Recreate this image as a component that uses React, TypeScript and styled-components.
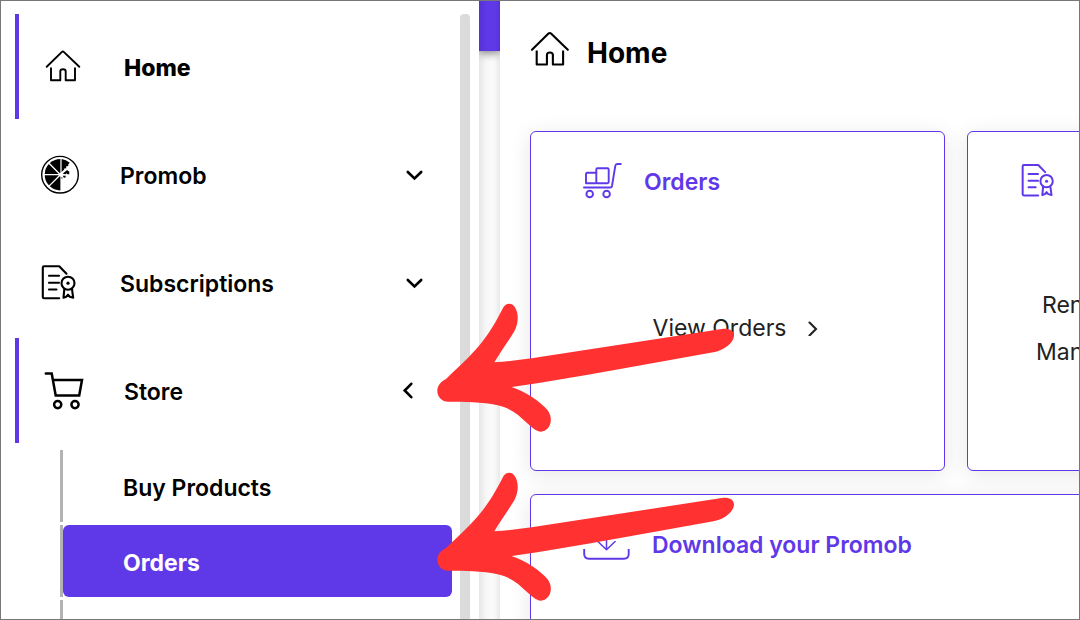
import React from 'react';
import styled, { createGlobalStyle, css } from 'styled-components';

const purple = '#5f38e8';

const GlobalStyle = createGlobalStyle`
  *, *::before, *::after { box-sizing: border-box; }
  body {
    margin: 0;
    background: #fff;
    color: #000;
    font-family: Inter, "Liberation Sans", sans-serif;
  }
  ul { list-style: none; margin: 0; padding: 0; }
  a { color: inherit; text-decoration: none; }
`;

const Frame = styled.div`
  position: relative;
  display: flex;
  height: 100vh;
  overflow: hidden;
  border: 1px solid #777;
  background: #fff;
`;

const Sidebar = styled.nav`
  display: flex;
  flex: none;
  width: 478px;
  padding: 13px 9px 0 14px;
`;

const Menu = styled.ul`
  display: flex;
  flex-direction: column;
  flex: 1;
  gap: 3px;
  margin-right: 8px;
`;

const itemLook = css<{ $active?: boolean }>`
  display: flex;
  align-items: center;
  gap: 40px;
  width: 100%;
  height: 105px;
  padding: 0 26px 0 25px;
  border: 0 solid ${purple};
  border-left-width: ${(p) => (p.$active ? '4px' : '0')};
  background: none;
  color: #000;
  font-family: inherit;
  font-size: 23px;
  line-height: 30px;
  text-align: left;
`;

const NavLink = styled.a<{ $active?: boolean }>`
  ${itemLook}
  font-weight: 800;
`;

const NavButton = styled.button<{ $active?: boolean }>`
  ${itemLook}
  font-weight: 600;
  cursor: pointer;
`;

const NavLabel = styled.span`
  flex: 1;
  padding-top: 2px;
`;

const Icon = styled.svg<{ $w?: number; $h?: number; $stroke?: number }>`
  flex: none;
  width: ${(p) => p.$w ?? 40}px;
  height: ${(p) => p.$h ?? p.$w ?? 40}px;
  fill: none;
  stroke: currentColor;
  stroke-width: ${(p) => p.$stroke ?? 1.9};
  stroke-linecap: round;
  stroke-linejoin: round;
`;

const SubMenu = styled.ul`
  display: flex;
  flex-direction: column;
  gap: 3px;
  margin: 7px 0 0 45px;
`;

const SubItem = styled.li`
  border-left: 3px solid #b3b3b3;
`;

const SubLink = styled.a<{ $current?: boolean }>`
  display: flex;
  align-items: center;
  height: 72px;
  padding: 4px 60px 0;
  border-radius: 6px;
  background: ${(p) => (p.$current ? purple : 'transparent')};
  color: ${(p) => (p.$current ? '#fff' : '#000')};
  font-size: 23px;
  font-weight: ${(p) => (p.$current ? 700 : 600)};
  line-height: 30px;
`;

const ScrollTrack = styled.div`
  flex: none;
  width: 10px;
  border-radius: 4px 4px 0 0;
  background: #dbdbdb;
`;

const Gutter = styled.div`
  flex: none;
  width: 21px;
  background: linear-gradient(to right, #e6e6e6, #f7f7f7 35%, #fbfbfb 60%, #f8f8f8 75%, #e9e9e9);
`;

const TopBar = styled.div`
  height: 50px;
  background: linear-gradient(to right, #5631d4, ${purple} 40%, ${purple} 80%, #5631d4);
  box-shadow: 0 2px 8px rgba(0, 0, 0, 0.5);
  clip-path: inset(0 0 -12px 0);
`;

const Main = styled.main`
  flex: 1;
  min-width: 0;
  padding: 27px 0 0 30px;
  overflow: hidden;
`;

const PageHeading = styled.header`
  display: flex;
  align-items: center;
  gap: 14px;
  height: 44px;
  margin: 0 0 59px -1px;
`;

const Title = styled.h1`
  margin: 0;
  padding-top: 5px;
  font-size: 28px;
  font-weight: 700;
  line-height: 36px;
`;

const Cards = styled.div`
  display: grid;
  grid-template-columns: repeat(2, 415px);
  gap: 23px 22px;
`;

const Card = styled.section<{ $wide?: boolean }>`
  display: flex;
  flex-direction: column;
  grid-column: ${(p) => (p.$wide ? '1 / -1' : 'auto')};
  min-height: 340px;
  padding: 28px 52px 16px;
  border: 1px solid ${purple};
  border-radius: 6px;
  background: #fff;
  box-shadow: 0 4px 22px rgba(0, 0, 0, 0.1);
`;

const CardHead = styled.div`
  display: flex;
  align-items: center;
  gap: 21px;
  height: 42px;
  color: ${purple};
`;

const CardTitle = styled.h2`
  margin: 0;
  padding-top: 2px;
  font-size: 23px;
  font-weight: 600;
  line-height: 30px;
`;

const Links = styled.div<{ $start?: boolean }>`
  display: flex;
  flex: 1;
  flex-direction: column;
  align-items: ${(p) => (p.$start ? 'flex-start' : 'center')};
  justify-content: center;
  padding-left: ${(p) => (p.$start ? '16px' : '0')};
`;

const CardLink = styled.a<{ $indent?: boolean }>`
  display: flex;
  align-items: center;
  gap: 20px;
  height: 47px;
  padding-left: ${(p) => (p.$indent ? '6px' : '0')};
  color: #222;
  font-size: 23px;
  line-height: 30px;
`;

const Pointer = styled.svg<{ $top: number }>`
  position: absolute;
  left: 435px;
  top: ${(p) => p.$top}px;
  width: 300px;
  height: 130px;
  fill: #ff3131;
  pointer-events: none;
`;

const HomeIcon = ({ size = 40 }: { size?: number }) => (
  <Icon $w={size} viewBox="0 0 40 40" aria-hidden="true">
    <path d="M2.7 19.8 17.7 5.1Q18.9 4 20 5.1L35.3 19.8" />
    <path strokeLinecap="butt" d="M7 20.5V33.2H16.3V24.6Q16.3 22.3 19 22.3T21.7 24.6V33.2H31V20.5" />
  </Icon>
);

const PromobIcon = () => (
  <Icon viewBox="0 0 40 40" aria-hidden="true">
    <circle cx="20" cy="19.7" r="18.3" strokeWidth="1.4" />
    <path d="M20.4 4A15.7 15.7 0 0 0 20.4 35.4Z" fill="currentColor" stroke="none" />
    <g fill="currentColor" stroke="none">
      <path d="M21.6 17V4.1Q26 4.8 29.8 7.8L28.2 9.6 28.4 11 26 11.6 26.3 13.2 24.2 13.4 24.2 14.6z" />
      <path d="M22.7 18.8 27.3 14.7 27.8 16 29.2 16.2 29.3 19.2H27.2L26.7 18.3 25.4 19.3z" />
      <path d="M22.8 20.8H26L25 22.9 23.5 22.3zM20.8 22.5l1.7.1-.3 1.4z" />
    </g>
    <path d="M20.4 19.7H4M20.4 19.7 9 8.3M20.4 19.7 9 31.1" stroke="#fff" strokeWidth="1.3" />
    <circle cx="20.6" cy="19.7" r="1.8" fill="#fff" stroke="none" />
  </Icon>
);

const LicenseIcon = ({ size = 40 }: { size?: number }) => (
  <Icon $w={size} $stroke={2.1} viewBox="0 0 40 40" aria-hidden="true">
    <path d="M26.5 10.7 19.2 3.2H4Q2.8 3.2 2.8 4.4V34Q2.8 35.2 4 35.2H19.2" />
    <path d="M9 12.7H19M9 19.8H19M9 26.5H16.5" />
    <circle cx="28" cy="20.2" r="6.5" />
    <circle cx="28" cy="20.2" r="1.6" fill="currentColor" stroke="none" />
    <path d="M24.3 26.2 23.5 34.8 26.2 33.8 28 31.8 29.8 33.8 33.2 34.8 32 26.2M28 31.8V33" />
  </Icon>
);

const CartIcon = () => (
  <Icon $stroke={2.5} viewBox="0 0 40 40" aria-hidden="true">
    <path strokeLinejoin="miter" d="M1.8 2.5H7.7L11.7 24.5H35.2L38 9H9" />
    <circle cx="13.7" cy="33.6" r="3.6" />
    <circle cx="31" cy="33.6" r="3.6" />
  </Icon>
);

const TrolleyIcon = () => (
  <Icon viewBox="0 0 40 40" aria-hidden="true">
    <path d="M37.8 3H34.3Q32.6 3 32.3 4.8L29 25Q28.7 26.5 27.3 26.5H1" />
    <path d="M13.3 11.8H4.3Q3 11.8 3 13.1V22.2H13.3" />
    <rect x="13.3" y="7.2" width="12.4" height="15" rx="1.2" />
    <circle cx="6.7" cy="33" r="3.3" />
    <circle cx="23.6" cy="33" r="3.3" />
  </Icon>
);

const DownloadIcon = () => (
  <Icon $w={48} $h={40} viewBox="0 0 48 40" aria-hidden="true">
    <path strokeLinecap="butt" d="M1.2 25V30Q1.2 34.7 5.9 34.7H41Q45.7 34.7 45.7 30V25" />
    <path strokeWidth="1.5" d="M23.5 4V25.7M14.9 17.5 23.5 25.7 32.1 17.5" />
  </Icon>
);

const Chevron = ({ d }: { d: string }) => (
  <Icon $w={24} $stroke={2.6} viewBox="0 0 24 24" aria-hidden="true">
    <path d={d} strokeLinejoin="miter" />
  </Icon>
);

const down = 'M5.8 9 12.5 15.4 19.2 9';
const left = 'M9.3 4.8 2.7 11.5 9.3 18.2';

const Arrow = ({ top }: { top: number }) => (
  <Pointer $top={top} viewBox="168 39 900 390" aria-hidden="true">
    <path d="M172 302C172 286 184 274 198 267C262 205 312 168 367 58C376 36 398 37 406 54C417 74 415 100 403 124C385 154 362 184 343 217Q400 213 455 205L1025 117C1046 114 1062 120 1062 138C1060 160 1030 182 1000 187C800 222 600 262 395 291C435 304 482 335 503 361C525 393 505 425 483 425C468 425 455 411 441 399C415 374 393 354 350 345C310 336 250 335 205 335C185 335 172 320 172 302Z" />
  </Pointer>
);

export default function App() {
  return (
    <>
      <GlobalStyle />
      <Frame>
        <Sidebar aria-label="Main menu">
          <Menu>
            <li>
              <NavLink href="#home" $active>
                <HomeIcon />
                <NavLabel>Home</NavLabel>
              </NavLink>
            </li>
            <li>
              <NavButton type="button" aria-expanded="false">
                <PromobIcon />
                <NavLabel>Promob</NavLabel>
                <Chevron d={down} />
              </NavButton>
            </li>
            <li>
              <NavButton type="button" aria-expanded="false">
                <LicenseIcon />
                <NavLabel>Subscriptions</NavLabel>
                <Chevron d={down} />
              </NavButton>
            </li>
            <li>
              <NavButton type="button" aria-expanded="true" $active>
                <CartIcon />
                <NavLabel>Store</NavLabel>
                <Chevron d={left} />
              </NavButton>
              <SubMenu>
                <SubItem>
                  <SubLink href="#buy">Buy Products</SubLink>
                </SubItem>
                <SubItem>
                  <SubLink href="#orders" $current aria-current="page">Orders</SubLink>
                </SubItem>
                <SubItem>
                  <SubLink as="div" />
                </SubItem>
              </SubMenu>
            </li>
          </Menu>
          <ScrollTrack />
        </Sidebar>
        <Gutter>
          <TopBar />
        </Gutter>
        <Main>
          <PageHeading>
            <HomeIcon size={44} />
            <Title>Home</Title>
          </PageHeading>
          <Cards>
            <Card>
              <CardHead>
                <TrolleyIcon />
                <CardTitle>Orders</CardTitle>
              </CardHead>
              <Links>
                <CardLink href="#orders">
                  View Orders
                  <Icon $w={16} $stroke={2.1} viewBox="0 0 16 16" aria-hidden="true">
                    <path d="M3.5 3 10 9.5 3.5 16" transform="translate(0 -0.5)" strokeLinejoin="miter" />
                  </Icon>
                </CardLink>
              </Links>
            </Card>
            <Card>
              <CardHead>
                <LicenseIcon size={38} />
              </CardHead>
              <Links $start>
                <CardLink href="#renew" $indent>Ren</CardLink>
                <CardLink href="#manage">Man</CardLink>
              </Links>
            </Card>
            <Card $wide>
              <CardHead>
                <DownloadIcon />
                <CardTitle>Download your Promob</CardTitle>
              </CardHead>
            </Card>
          </Cards>
        </Main>
        <Arrow top={302} />
        <Arrow top={471} />
      </Frame>
    </>
  );
}
